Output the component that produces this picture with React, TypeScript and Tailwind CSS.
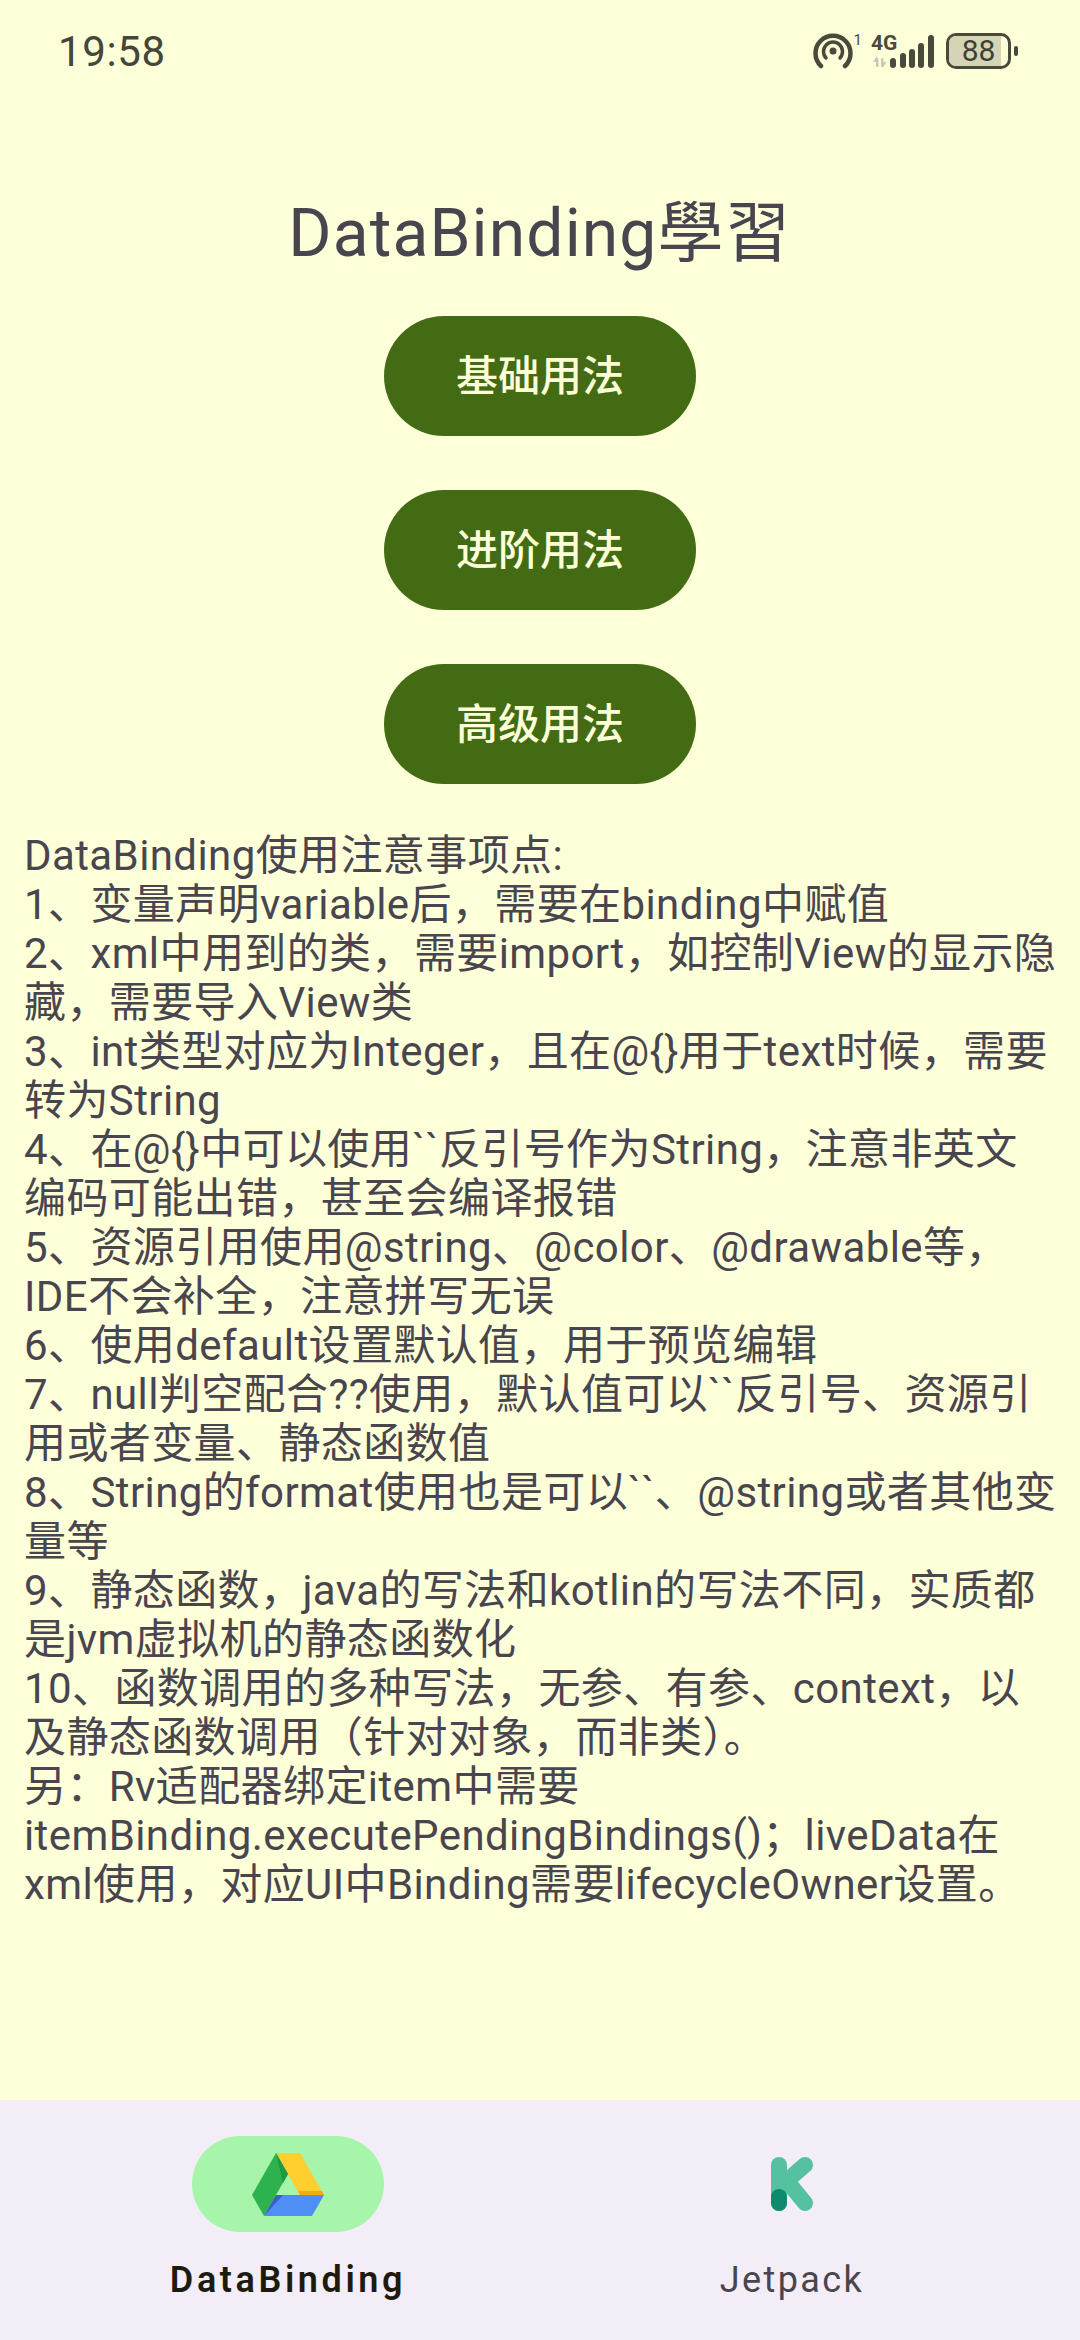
const lines = [
  "DataBinding使用注意事项点:",
  "1、变量声明variable后，需要在binding中赋值",
  "2、xml中用到的类，需要import，如控制View的显示隐",
  "藏，需要导入View类",
  "3、int类型对应为Integer，且在@{}用于text时候，需要",
  "转为String",
  "4、在@{}中可以使用``反引号作为String，注意非英文",
  "编码可能出错，甚至会编译报错",
  "5、资源引用使用@string、@color、@drawable等，",
  "IDE不会补全，注意拼写无误",
  "6、使用default设置默认值，用于预览编辑",
  "7、null判空配合??使用，默认值可以``反引号、资源引",
  "用或者变量、静态函数值",
  "8、String的format使用也是可以``、@string或者其他变",
  "量等",
  "9、静态函数，java的写法和kotlin的写法不同，实质都",
  "是jvm虚拟机的静态函数化",
  "10、函数调用的多种写法，无参、有参、context，以",
  "及静态函数调用（针对对象，而非类）。",
  "另：Rv适配器绑定item中需要",
  "itemBinding.executePendingBindings()；liveData在",
  "xml使用，对应UI中Binding需要lifecycleOwner设置。",
];

function Hotspot() {
  return (
    <svg width="40" height="36" viewBox="0 0 40 36" fill="none" stroke="#4a4a3c" strokeWidth="4.5" strokeLinecap="round">
      <path d="M8 33 A17.5 17.5 0 1 1 32 33" />
      <path d="M13 25 A9.5 9.5 0 1 1 27 25" strokeWidth="3.5" />
      <circle cx="20" cy="18" r="3.5" fill="#4a4a3c" stroke="none" />
    </svg>
  );
}

function Signal() {
  return (
    <svg width="64" height="34" viewBox="0 0 64 34">
      <g fill="#c9c9b4">
        <rect x="5" y="23" width="2.5" height="9" rx="1" />
        <path d="M6 21 l-4 6 h4z" />
        <rect x="10" y="23" width="2.5" height="9" rx="1" />
        <path d="M11.5 33 l4 -6 h-4z" />
      </g>
      <g fill="#4a4a3c">
        <rect x="19" y="23" width="6" height="10" rx="3" />
        <rect x="29" y="18" width="6" height="15" rx="3" />
        <rect x="38" y="14" width="6" height="19" rx="3" />
        <rect x="47" y="8" width="6" height="25" rx="3" />
        <rect x="57" y="0" width="6" height="33" rx="3" />
      </g>
    </svg>
  );
}

function Drive() {
  return (
    <svg width="72" height="63" viewBox="0 0 72 63">
      <path d="M24 0 L48 0 L72 42 L48 42 Z" fill="#ffcf2f" />
      <path d="M24 0 L36 21 L12 63 L0 42 Z" fill="#2db24d" />
      <path d="M24 42 L72 42 L60 63 L12 63 Z" fill="#4f8ef5" />
      <path d="M24 0 L36 21 L31 30 Z" fill="#1f9a44" />
      <path d="M24 42 L31 42 L12 63 Z" fill="#3a5fc8" />
      <path d="M46 38 L70 38 L72 42 L48 42 Z" fill="#f0ac10" />
    </svg>
  );
}

function KLogo() {
  return (
    <svg width="42" height="54" viewBox="0 0 42 54">
      <rect x="0" y="0" width="16" height="54" rx="8" fill="#55c1a1" />
      <path d="M12 27 L34 8 M16 24 L34 46" stroke="#55c1a1" strokeWidth="16" strokeLinecap="round" fill="none" />
      <path d="M0 40 A8 8 0 0 1 8 32 A8 8 0 0 1 16 40 L16 46 A8 8 0 0 1 0 46 Z" fill="#0e8a6c" />
    </svg>
  );
}

export default function App() {
  const font = "font-['Roboto','Noto_Sans_CJK_SC',sans-serif]";
  return (
    <div className={`w-[1080px] h-[2340px] flex flex-col bg-[#fdffd8] text-[#49454f] ${font}`}>
      <div className="h-[104px] shrink-0 flex items-start justify-between pl-[58px] pr-[62px] pt-[31px]">
        <span className="text-[42px] leading-[42px] tracking-[0.6px] text-[#45463a]">19:58</span>
        <div className="flex items-start pt-[2px]">
          <Hotspot />
          <span className="text-[15px] leading-[15px] text-[#4a4a3c] ml-[1px]">1</span>
          <div className="relative ml-[9px] w-[64px] h-[36px]">
            <span className="absolute left-0 top-0 text-[21px] leading-[21px] font-bold text-[#4a4a3c]">4G</span>
            <div className="absolute left-0 top-[2px]"><Signal /></div>
          </div>
          <div className="ml-[11px] w-[65px] h-[36px] rounded-[10px] border-[3px] border-[#4a4a3c] overflow-hidden relative flex items-center justify-center">
            <div className="absolute left-0 top-0 bottom-0 w-[52px] bg-[#d3d5b6]" />
            <span className="relative text-[30px] leading-[30px] text-[#3f4034]">88</span>
          </div>
          <div className="ml-[3px] mt-[13px] w-[4px] h-[10px] rounded-full bg-[#4a4a3c]" />
        </div>
      </div>

      <div className="h-[78px] mt-[91px] shrink-0 text-center text-[66px] leading-[78px] tracking-[1.1px]">DataBinding學習</div>

      <div className="mt-[43px] flex flex-col items-center gap-[54px]">
        {["基础用法", "进阶用法", "高级用法"].map((t) => (
          <div key={t} className="w-[312px] h-[120px] rounded-[60px] bg-[#436b14] text-[#fdffd8] flex items-center justify-center text-[42px] font-medium">{t}</div>
        ))}
      </div>

      <div className="mt-[47px] px-[24px] text-[42px] leading-[49px] tracking-[0.4px] whitespace-nowrap">
        {lines.map((l) => <div key={l}>{l}</div>)}
      </div>

      <div className="mt-auto h-[240px] shrink-0 bg-[#f3edf7] flex px-[36px] pt-[36px]">
        <div className="flex-1 flex flex-col items-center">
          <div className="w-[192px] h-[96px] rounded-[48px] bg-[#a6f5ab] flex items-center justify-center"><Drive /></div>
          <div className="mt-[26px] text-[36px] leading-[44px] font-semibold tracking-[3.6px] text-[#1d1b10] whitespace-nowrap">DataBinding</div>
        </div>
        <div className="flex-1 flex flex-col items-center">
          <div className="h-[96px] flex items-center justify-center"><KLogo /></div>
          <div className="mt-[26px] text-[36px] leading-[44px] tracking-[2.4px] whitespace-nowrap">Jetpack</div>
        </div>
      </div>
    </div>
  );
}
